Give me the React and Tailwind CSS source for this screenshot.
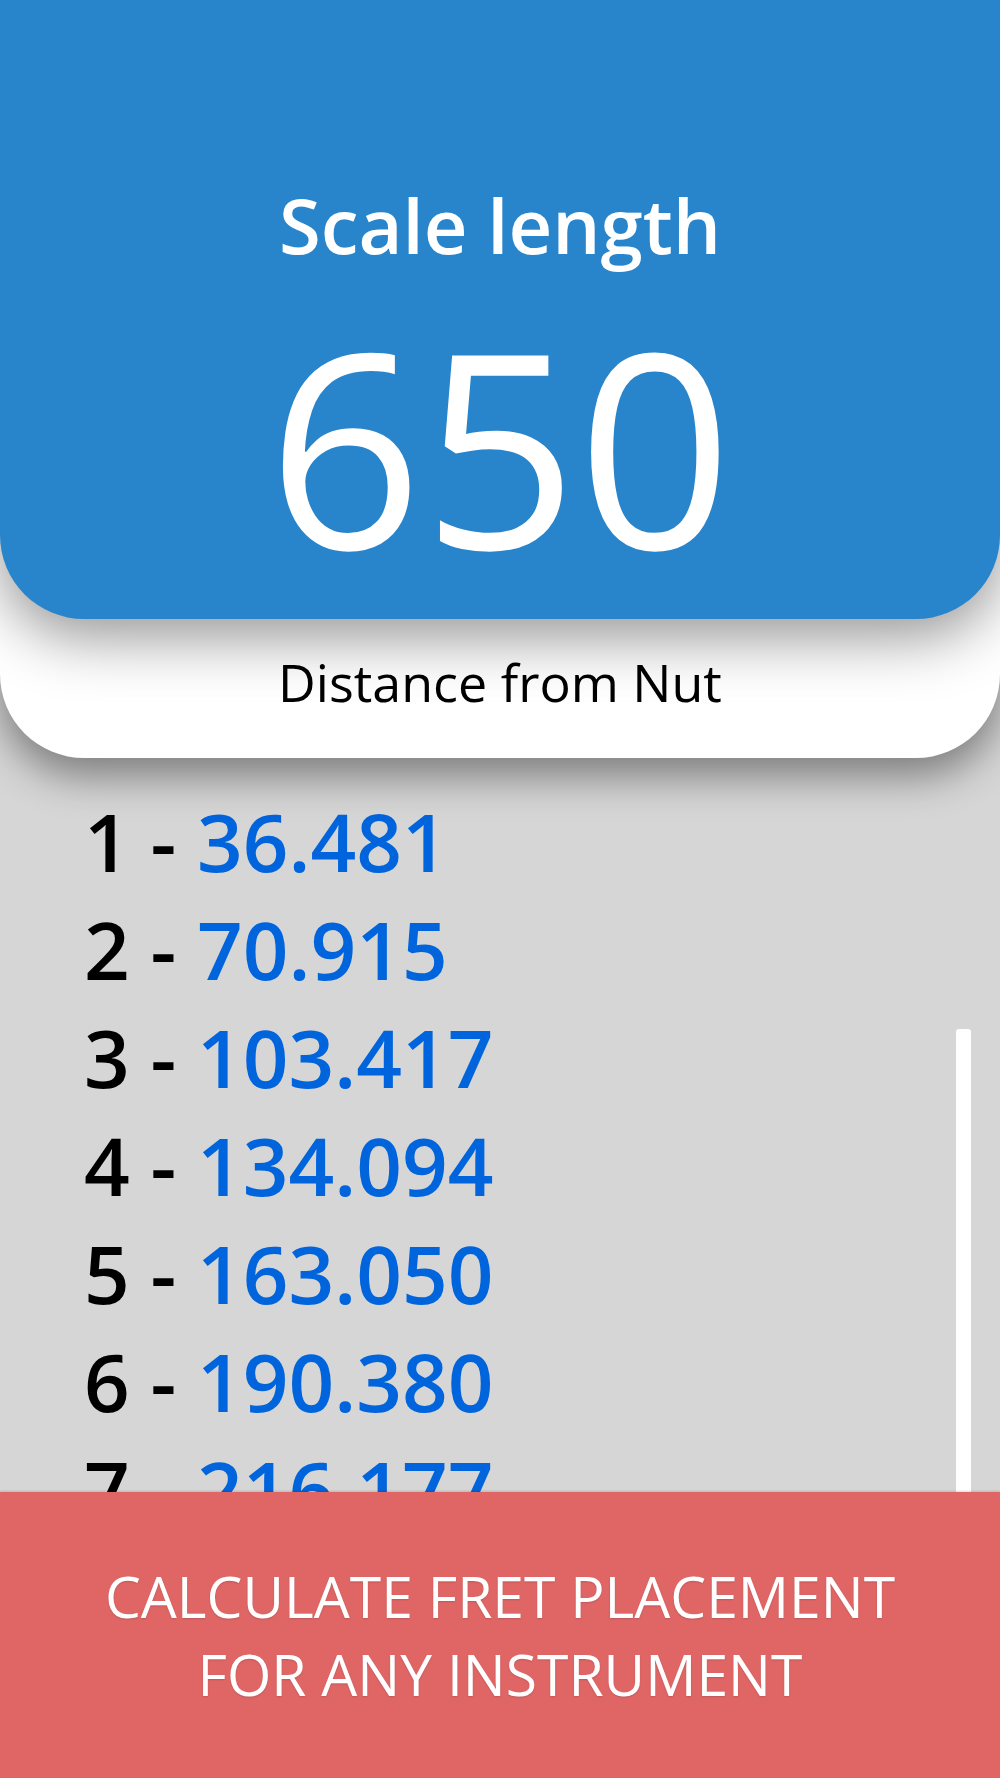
const FRETS = [
  ['1', '36.481'],
  ['2', '70.915'],
  ['3', '103.417'],
  ['4', '134.094'],
  ['5', '163.050'],
  ['6', '190.380'],
  ['7', '216.177'],
  ['8', '240.527'],
]

export default function App() {
  return (
    <div className="w-[1000px] h-[1778px] bg-[#d6d6d6] flex flex-col overflow-hidden font-['Open_Sans',sans-serif]">
      {/* Header card */}
      <div className="relative z-10 bg-white rounded-b-[84px] shadow-[0_18px_40px_rgba(0,0,0,0.42)]">
        <div className="relative z-10 h-[619px] bg-[#2885cb] rounded-b-[84px] shadow-[0_18px_60px_rgba(0,0,0,0.42)] flex flex-col items-center pt-[187px]">
          <h1 className="text-[76px] leading-none font-semibold text-white">Scale length</h1>
          <div className="mt-[45px] text-[271px] leading-none font-normal text-white">650</div>
        </div>
        <div className="h-[139px] pt-[37px] text-center">
          <p className="text-[52px] leading-none text-black">Distance from Nut</p>
        </div>
      </div>

      {/* Fret list */}
      <div className="relative flex-1 overflow-hidden pl-[84px] pt-[29px]">
        {FRETS.map(([n, d]) => (
          <div key={n} className="text-[80px] leading-[108px] font-semibold whitespace-nowrap">
            <span className="text-black">{n} - </span>
            <span className="text-[#0064dc]">{d}</span>
          </div>
        ))}
        <div className="absolute left-[956px] top-[271px] bottom-0 w-[15px] bg-white rounded-t-[3px]" />
      </div>

      {/* Banner */}
      <div className="relative z-10 h-[286px] bg-[#e06666] shadow-[0_-1px_2px_rgba(0,0,0,0.15)] flex items-center justify-center">
        <p className="text-center text-white text-[57px] leading-[78px] [text-shadow:0_1px_2px_rgba(0,0,0,0.15)]">
          CALCULATE FRET PLACEMENT
          <br />
          FOR ANY INSTRUMENT
        </p>
      </div>
    </div>
  )
}
